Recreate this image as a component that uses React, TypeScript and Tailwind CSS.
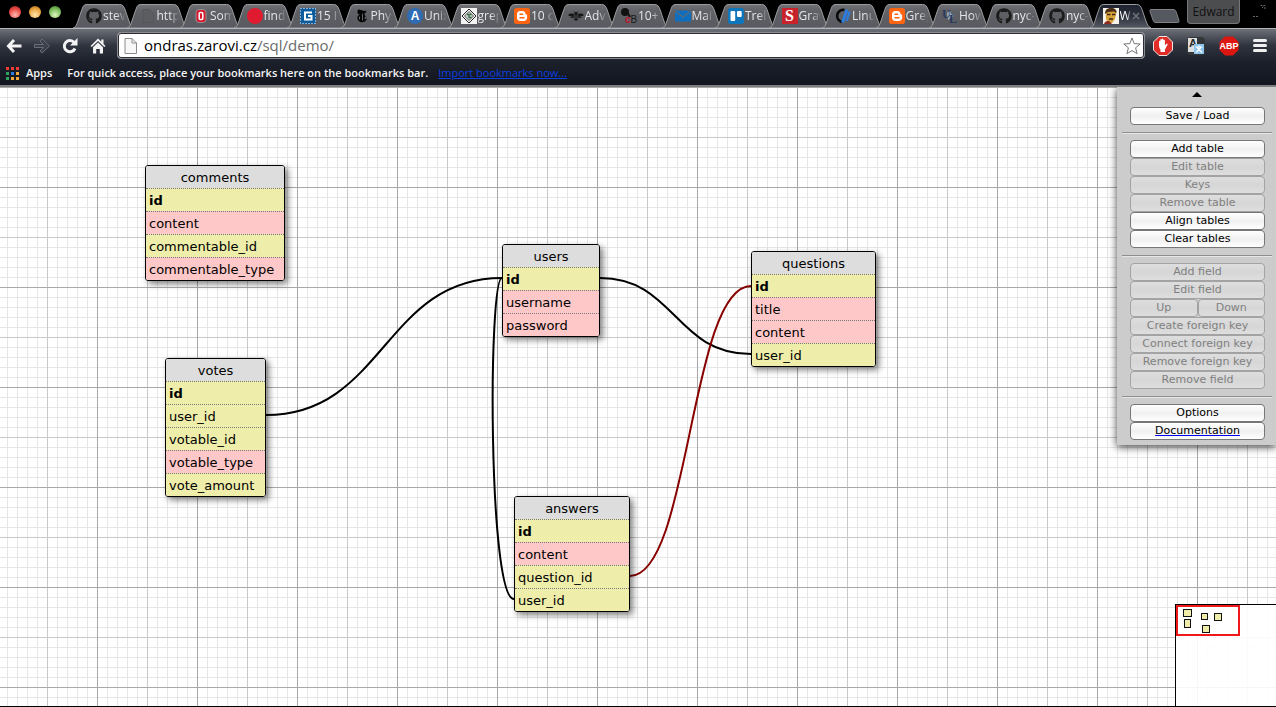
import React from "react";
import { FaGithub } from "react-icons/fa";

type Tab = { title: string; icon: React.ReactNode; active?: boolean };

const glyph = "font-['Liberation_Sans',sans-serif] font-bold";

const blogger = (
  <svg viewBox="0 0 16 16" className="size-4">
    <rect width="16" height="16" rx="2.5" fill="#ff6510" />
    <path
      d="M6 3h2.6C10.300 3 11.400 4.200 11.400 5.600c0 .9.5 1 1.100 1 .4 0 .6.3.6.7v2.400c0 1.900-1.400 3.300-3.300 3.300H6.200C4.300 13 3 11.700 3 9.800V6.200C3 4.300 4.300 3 6 3z"
      fill="#fff"
    />
    <path d="M6 6.200h2.600M6 9.800h4" stroke="#ff6510" strokeWidth="1.500" strokeLinecap="round" />
  </svg>
);

const github = <FaGithub className="size-4 text-[#1b1b1b]" />;

const tabs: Tab[] = [
  { title: "stev", icon: github },
  {
    title: "http",
    icon: (
      <svg viewBox="0 0 16 16" className="size-4">
        <path d="M3 1.500h6.500l4 4v9H3z" fill="#5b5d61" stroke="#54565a" />
      </svg>
    ),
  },
  {
    title: "Som",
    icon: (
      <svg viewBox="0 0 16 16" className="size-4">
        <rect x="3" y="1.500" width="10" height="13" rx="3" fill="#d9182d" stroke="#8f9194" />
        <rect x="6.200" y="4.500" width="3.600" height="7" rx="1" fill="none" stroke="#fff" strokeWidth="1.500" />
      </svg>
    ),
  },
  {
    title: "find",
    icon: (
      <svg viewBox="0 0 16 16" className="size-4">
        <circle cx="8" cy="8" r="8" fill="#e01b2f" />
      </svg>
    ),
  },
  {
    title: "15 I",
    icon: (
      <svg viewBox="0 0 16 16" className="size-4">
        <rect width="16" height="16" fill="#0e5c9c" />
        <rect x=".5" y=".5" width="15" height="15" fill="none" stroke="#fff" strokeDasharray="1 2" />
        <path d="M12 4.500H5v7h6.500V8H8" fill="none" stroke="#fff" strokeWidth="2" />
      </svg>
    ),
  },
  {
    title: "Phys",
    icon: (
      <svg viewBox="0 0 16 16" className="size-4">
        <path
          d="M3.500 3.200c0-1.200 1-1.900 2.200-1.500l4.500 1.300c1 .2 1.600-.2 1.700-1.100.8 1.600.2 2.900-1.300 3.100v2.200l1.400 1-1.400 1v2.300c1.100-.1 1.900-.8 2.200-1.900.2 2.800-1.600 4.600-4.400 4.600-3 0-5-1.800-5-4.300 0-1.700 1-2.900 2.500-3.400-1 .1-2.200-.400-2.400-1.700z"
          fill="#050505"
        />
        <path d="M8.500 5.500v7M5.500 8.500v3" stroke="#65676b" strokeWidth="1" />
      </svg>
    ),
  },
  {
    title: "Unix",
    icon: (
      <span className={"flex size-4 items-center justify-center rounded-full bg-[#2f6cb3] text-xs text-white " + glyph}>
        A
      </span>
    ),
  },
  {
    title: "grep",
    icon: (
      <svg viewBox="0 0 16 16" className="size-4">
        <rect width="16" height="16" fill="#f2f2f2" />
        <path d="M8 1l7 7-7 7-7-7z" fill="none" stroke="#222" strokeWidth="1" />
        <path d="M8 3.500L12.500 8 8 12.500 3.500 8z" fill="#c3d2c7" stroke="#333" strokeWidth=".8" />
        <path d="M6 6.500h2v3h2.500M8 6.500h2.500" fill="none" stroke="#3f6b4c" strokeWidth="1.300" />
      </svg>
    ),
  },
  { title: "10 c", icon: blogger },
  {
    title: "Adv",
    icon: (
      <svg viewBox="0 0 16 16" className="size-4">
        <path d="M0 7c2-2 5-2 6.500-.2h3C11 5 14 5 16 7c-1 1.300-3 1.500-5 1.200 1 .3 2 .8 2.500 1.600-1.500.5-2.500 0-3.500-.6H6c-1 .6-2 1.100-3.500.6.5-.8 1.500-1.300 2.500-1.600-2 .3-4 .1-5-1.200z" fill="#151515" />
        <path d="M6 3.500l1 1.200h2l1-1.200" stroke="#151515" fill="none" />
        <circle cx="8" cy="5.700" r="1.600" fill="#151515" />
        <path d="M5.500 8.500h5l-.5 3L8 13 6 11.500z" fill="#151515" />
        <path d="M5.500 8h5M5.500 10h5" stroke="#65676b" strokeWidth=".8" />
      </svg>
    ),
  },
  {
    title: "10+",
    icon: (
      <span className={"relative block size-4 text-[10px] leading-none " + glyph}>
        <svg viewBox="0 0 16 16" className="size-4">
          <circle cx="4" cy="4" r="4" fill="#111" />
          <path d="M6 4l3 5" stroke="#111" strokeWidth="2" />
        </svg>
        <span className="absolute left-1 top-[7px] text-[#c8102e]">
          c<span className="font-normal text-[#1a1a1a]">B</span>
        </span>
      </span>
    ),
  },
  {
    title: "Mail",
    icon: (
      <svg viewBox="0 0 16 16" className="size-4">
        <rect y="2.500" width="16" height="11" fill="#0f6fbe" />
        <path d="M0 3l8 6 8-6" fill="none" stroke="#5b6a7a" strokeWidth="1.200" />
      </svg>
    ),
  },
  {
    title: "Trel",
    icon: (
      <svg viewBox="0 0 16 16" className="size-4">
        <rect width="16" height="16" rx="2.500" fill="#0f76bb" />
        <rect x="2.500" y="3" width="4.700" height="10" rx="1" fill="#fff" />
        <rect x="9" y="3" width="4.700" height="6" rx="1" fill="#fff" />
      </svg>
    ),
  },
  {
    title: "Grav",
    icon: (
      <span className="flex size-4 items-center justify-center bg-[#c9222b] font-['Liberation_Serif',serif] text-base leading-none font-bold text-white">
        S
      </span>
    ),
  },
  {
    title: "Linu",
    icon: (
      <svg viewBox="0 0 16 16" className="size-4">
        <path d="M9.500 2A6 6 0 1 0 7 14" fill="none" stroke="#080808" strokeWidth="2.500" />
        <path d="M12 1.500L7.500 14.500" stroke="#2d7de0" strokeWidth="3" />
        <path d="M14.700 3.500l-3 9.500" stroke="#2d7de0" strokeWidth="2.200" />
      </svg>
    ),
  },
  { title: "Grep", icon: blogger },
  {
    title: "How",
    icon: (
      <span className="relative block size-4 font-['Liberation_Serif',serif] text-xs leading-none font-bold text-[#26395f]">
        <span className="absolute left-0 top-0">U</span>
        <span className="absolute left-[7px] top-[5px]">L</span>
        <svg viewBox="0 0 16 16" className="size-4">
          <path d="M5 5l3-2 1 3 3 2-3 1-3 3z" fill="#9db4c8" />
        </svg>
      </span>
    ),
  },
  { title: "nyc-", icon: github },
  { title: "nyc-", icon: github },
  {
    title: "W",
    active: true,
    icon: (
      <svg viewBox="0 0 16 16" className="size-4">
        <rect width="16" height="16" fill="#f6f2ea" />
        <path d="M3 6c0-4 3-5.500 6-5 3 0 4.500 2 4 5l-1 5-3 4H5L3 11z" fill="#d8a23a" />
        <path d="M2 6C2 2 4 0 8 0s6 2 5.500 5L11 3.500 5 4z" fill="#4a2c14" />
        <path d="M4 6.500h3.500M9 6.500h3.500M6 11h4" stroke="#3c2412" strokeWidth="1.300" />
        <path d="M1 16c1-3 3-3 5-3l3 3z" fill="#8c2b22" />
      </svg>
    ),
  },
];

function BrowserTab({ tab }: { tab: Tab }) {
  return (
    <button type="button" className="relative flex h-6 min-w-0 flex-1 items-center pl-[13px] text-left">
      <svg viewBox="0 0 62 24" preserveAspectRatio="none" className="absolute inset-y-0 left-0 h-full w-[calc(100%+8px)]">
        <path
          d="M0 24C4 23 4 19 9 5.500 10 2 11 .5 14 .5H47C50 .5 51 2 52.500 5.500 57 19 58 23 62 24z"
          fill={tab.active ? "url(#tabActive)" : "url(#tabIdle)"}
          stroke="#9c9ea1"
          strokeWidth="1"
        />
      </svg>
      <span className="relative shrink-0">{tab.icon}</span>
      <span
        className={
          "relative ml-px min-w-0 flex-1 whitespace-nowrap text-xs font-medium [mask-image:linear-gradient(to_right,black_55%,transparent_95%)] " +
          (tab.active ? "text-white" : "text-[#e4e5e7]")
        }
      >
        {tab.title}
      </span>
      {tab.active && (
        <svg viewBox="0 0 8 8" className="relative mr-[3px] size-2 shrink-0">
          <path d="M1 1l6 6M7 1L1 7" stroke="#6d727b" strokeWidth="1.500" />
        </svg>
      )}
    </button>
  );
}

function TrafficLight({ tone }: { tone: string }) {
  return <button type="button" aria-label="Window control" className={"size-3 rounded-full " + tone} />;
}

function Chrome() {
  return (
    <header className="bg-black">
      <svg className="absolute size-0">
        <defs>
          <linearGradient id="tabIdle" x1="0" y1="0" x2="0" y2="1">
            <stop offset="0" stopColor="#6f7175" />
            <stop offset=".3" stopColor="#5f6166" />
            <stop offset="1" stopColor="#585a5f" />
          </linearGradient>
          <linearGradient id="tabActive" x1="0" y1="0" x2="0" y2="1">
            <stop offset="0" stopColor="#1e2230" />
            <stop offset=".5" stopColor="#2c313d" />
            <stop offset="1" stopColor="#565a63" />
          </linearGradient>
        </defs>
      </svg>
      <div className="flex h-7 items-end">
        <div className="flex w-[73px] shrink-0 gap-2 self-start pt-[6px] pl-[9px]">
          <TrafficLight tone="bg-[radial-gradient(circle_at_50%_75%,#ffb9b3,#e8443f_60%,#8f2622)]" />
          <TrafficLight tone="bg-[radial-gradient(circle_at_50%_75%,#ffe7ac,#e9a13b_60%,#8c5a18)]" />
          <TrafficLight tone="bg-[radial-gradient(circle_at_50%_75%,#dcf7c0,#76b956_60%,#3f6e2c)]" />
        </div>
        <nav className="flex min-w-0 flex-1">
          {tabs.map((tab, i) => (
            <BrowserTab key={i} tab={tab} />
          ))}
        </nav>
        <div className="flex w-[133px] shrink-0 items-start self-stretch pl-[6px]">
          <button type="button" aria-label="New tab" className="mt-[9px]">
            <svg viewBox="0 0 31 14" className="h-[14px] w-[31px]">
              <path d="M2 .5h22c2 0 2.500 1 3 2l3 9c.3 1 0 2-1.500 2H7c-1.500 0-2.300-.5-2.800-2L1 2.500C.6 1.200 1 .5 2 .5z" fill="#55585f" stroke="#808288" />
            </svg>
          </button>
          <button type="button" className="ml-[7px] h-6 w-[53px] rounded-b-sm border border-t-0 border-[#75777a] bg-[#4c4d4f] text-xs font-medium text-[#111]">
            Edward
          </button>
          <svg viewBox="0 0 16 16" className="mt-[2px] ml-3 size-4">
            <path d="M1 14.500h6M8.500 3.500h4.500v4M10 6l3-3" stroke="#66686b" strokeDasharray="2 1" fill="none" />
          </svg>
        </div>
      </div>

      <div className="border-t border-[#b3b5b8] bg-linear-to-b from-[#6d7077] via-[#30343f] via-50% to-[#1c202b]">
        <div className="flex h-[33px] items-center pl-[6px]">
          <div className="flex w-[111px] shrink-0 items-center gap-3 text-[#f3f3f3]">
            <button type="button" aria-label="Back">
              <svg viewBox="0 0 16 16" className="size-4">
                <path d="M8 2L2.500 8 8 14M3 8H15.500" fill="none" stroke="currentColor" strokeWidth="3" />
              </svg>
            </button>
            <button type="button" aria-label="Forward">
              <svg viewBox="0 0 16 16" className="size-4">
                <path d="M.5 6.500H9.500L6 3l2-2 7.500 7L8 15 6 13 9.500 9.500H.5z" fill="#3b3f49" stroke="#6a6d75" />
              </svg>
            </button>
            <button type="button" aria-label="Reload">
              <svg viewBox="0 0 16 16" className="size-4">
                <path d="M13 10.500A5.600 5.600 0 1 1 12.200 4.500" fill="none" stroke="currentColor" strokeWidth="3" />
                <path d="M15.500 0v7.500H8z" fill="currentColor" />
              </svg>
            </button>
            <button type="button" aria-label="Home">
              <svg viewBox="0 0 16 16" className="size-4">
                <path d="M8 .5L.5 8l1.200 1L8 3l6.300 6 1.200-1L13.500 6V1.500h-2.200V3.800z" fill="currentColor" />
                <path d="M8 4.500l5 4.800V15.500H9.800V11H6.200v4.500H3V9.300z" fill="currentColor" />
              </svg>
            </button>
          </div>
          <div className="relative flex h-[27px] min-w-0 flex-1 items-center rounded border border-[#8a8c90] bg-white pl-[6px] shadow-[inset_0_0_0_1px_#2a2d36]">
            <svg viewBox="0 0 13 16" className="h-4 w-[13px] shrink-0">
              <path d="M1 .5h7l4.500 4.500v10.500H1z" fill="#f7f7f7" stroke="#8b8b8b" />
              <path d="M8 .5V5h4.500" fill="none" stroke="#8b8b8b" />
            </svg>
            <label className="ml-[7px] flex flex-1 text-[15px] whitespace-nowrap text-black">
              <span>ondras.zarovi.cz</span>
              <input
                aria-label="Address"
                defaultValue="/sql/demo/"
                className="min-w-0 flex-1 bg-transparent text-[#6b6b6b] outline-none"
              />
            </label>
            <button type="button" aria-label="Bookmark" className="mr-[3px] shrink-0">
              <svg viewBox="0 0 18 18" className="size-[18px]">
                <path d="M9 1l2.200 5.600 6 .4-4.600 3.800 1.500 5.900L9 13.500l-5.100 3.200 1.500-5.900L.8 7l6-.4z" fill="#fff" stroke="#757575" />
              </svg>
            </button>
          </div>
          <div className="flex w-[131px] shrink-0 items-center gap-[14px] pl-2">
            <button type="button" aria-label="Blocker">
              <svg viewBox="0 0 20 20" className="size-5">
                <path d="M6 .5h8L19.500 6v8L14 19.500H6L.5 14V6z" fill="#e02d28" stroke="#f1e4e4" />
                <path d="M6 9.500V5.500c0-1 1.300-1 1.300 0V4c0-1.200 1.500-1.200 1.500 0v-.7c0-1.200 1.600-1.200 1.600 0V4.500c0-1.100 1.500-1.100 1.500 0v5l1.200-1.500c.8-.8 1.900-.2 1.400.8L12 13.500V16H7.500v-2.500C6.500 12.500 6 11 6 9.500z" fill="#fff" />
              </svg>
            </button>
            <button type="button" aria-label="Translate" className={"relative size-[18px] rounded-sm bg-[#34373a] text-left text-[11px] leading-none text-[#2a2a2a] " + glyph}>
              <span className="absolute top-px left-px h-[14px] w-[9px] bg-[#dcdedf] pl-px">A</span>
              <svg viewBox="0 0 10 10" className="absolute right-px bottom-px size-[10px]">
                <rect width="10" height="10" fill="#8cc3ea" />
                <path d="M1.500 3h7M5 1.500V3M7 3.500L2 8.500M3 3.500l5 5" stroke="#fff" strokeWidth="1.200" />
              </svg>
            </button>
            <button type="button" aria-label="Adblock" className="relative size-5">
              <svg viewBox="0 0 20 20" className="absolute inset-0 size-5">
                <path d="M6 .5h8L19.500 6v8L14 19.500H6L.5 14V6z" fill="#dc1712" />
              </svg>
              <span className={"relative block text-[9px] leading-5 text-white " + glyph}>ABP</span>
            </button>
            <button type="button" aria-label="Menu" className="flex flex-col gap-[2px]">
              <span className="h-[3px] w-[14px] rounded-xs bg-[#f0f0f0]" />
              <span className="h-[3px] w-[14px] rounded-xs bg-[#f0f0f0]" />
              <span className="h-[3px] w-[14px] rounded-xs bg-[#f0f0f0]" />
            </button>
          </div>
        </div>
      </div>
      <div className="flex h-[25px] items-center border-b-2 border-[#7d7d7d] bg-linear-to-b from-[#1c202b] to-[#13161f] pl-[6px] text-[11px] font-semibold text-[#f4f4f4]">
        <svg viewBox="0 0 13 13" className="size-[13px]">
          <path d="M0 0h3v3H0zM5 0h3v3H5zM10 0h3v3h-3z" fill="#ef3b36" />
          <path d="M0 5h3v3H0z" fill="#2fa35c" />
          <path d="M5 5h3v3H5z" fill="#2a7de1" />
          <path d="M10 5h3v3h-3zM5 10h3v3H5zM10 10h3v3h-3z" fill="#f5a83a" />
          <path d="M0 10h3v3H0z" fill="#2fa35c" />
        </svg>
        <a href="#apps" className="ml-[7px]">Apps</a>
        <span className="ml-[15px]">For quick access, place your bookmarks here on the bookmarks bar.</span>
        <a href="#import" className="ml-[10px] font-medium text-[#0a3fe0] underline">Import bookmarks now...</a>
      </div>
    </header>
  );
}

type Field = [name: string, kind: "key" | "num" | "text"];
type Entity = { name: string; place: string; fields: Field[] };

const entities: Entity[] = [
  {
    name: "comments",
    place: "left-[145px] top-[78px] w-[140px]",
    fields: [["id", "key"], ["content", "text"], ["commentable_id", "num"], ["commentable_type", "text"]],
  },
  {
    name: "users",
    place: "left-[502px] top-[157px] w-[98px]",
    fields: [["id", "key"], ["username", "text"], ["password", "text"]],
  },
  {
    name: "questions",
    place: "left-[751px] top-[164px] w-[125px]",
    fields: [["id", "key"], ["title", "text"], ["content", "text"], ["user_id", "num"]],
  },
  {
    name: "votes",
    place: "left-[165px] top-[271px] w-[101px]",
    fields: [["id", "key"], ["user_id", "num"], ["votable_id", "num"], ["votable_type", "text"], ["vote_amount", "num"]],
  },
  {
    name: "answers",
    place: "left-[514px] top-[409px] w-[116px]",
    fields: [["id", "key"], ["content", "text"], ["question_id", "num"], ["user_id", "num"]],
  },
];

const fieldTone = {
  key: "bg-[#eeeeaa] font-bold",
  num: "bg-[#eeeeaa]",
  text: "bg-[#ffc8c8]",
};

function EntityTable({ entity }: { entity: Entity }) {
  return (
    <div
      className={
        "absolute overflow-hidden rounded-[3px] border border-black shadow-[3px_3px_6px_rgba(0,0,0,0.5)] font-['DejaVu_Sans',sans-serif] text-[13px] leading-5 text-black " +
        entity.place
      }
    >
      <table className="w-full border-separate border-spacing-0">
        <thead>
          <tr>
            <th className="h-[22px] bg-[#dddddd] p-0 pt-[2px] font-normal">{entity.name}</th>
          </tr>
        </thead>
        <tbody>
          {entity.fields.map(([name, kind]) => (
            <tr key={name}>
              <td className={"h-[23px] border-t border-dotted border-[#777] p-0 pt-[2px] pl-[3px] " + fieldTone[kind]}>{name}</td>
            </tr>
          ))}
        </tbody>
      </table>
    </div>
  );
}

function PanelButton({ label, disabled }: { label: string; disabled?: boolean }) {
  return (
    <button
      type="button"
      disabled={disabled}
      className="h-[18px] w-full min-w-0 flex-1 rounded border border-[#777] bg-linear-to-b from-white via-[#f0f0f0] via-50% to-white leading-4 text-black disabled:border-[#a3a3a3] disabled:from-[#dedede] disabled:via-[#d6d6d6] disabled:to-[#dedede] disabled:text-[#808080]"
    >
      {label}
    </button>
  );
}

function Group({ children }: { children: React.ReactNode }) {
  return <div className="flex flex-col pr-[7px] pl-2">{children}</div>;
}

function Rule() {
  return <hr className="mt-[7px] mb-[6px] h-[2px] border-t border-b border-t-[#8e8e8e] border-b-[#e6e6e6]" />;
}

function SidePanel() {
  return (
    <aside className="absolute top-0 right-0 w-[159px] bg-[#cccccc] pr-1 pb-[5px] pl-[5px] font-['DejaVu_Sans',sans-serif] text-[11px] shadow-[0_2px_8px_rgba(0,0,0,0.75)]">
      <button type="button" aria-label="Collapse" className="flex h-5 w-full items-start justify-center pt-[5px]">
        <svg viewBox="0 0 10 5" className="h-[5px] w-[10px]">
          <path d="M5 0l5 5H0z" fill="#000" />
        </svg>
      </button>
      <Group>
        <PanelButton label="Save / Load" />
      </Group>
      <Rule />
      <Group>
        <PanelButton label="Add table" />
        <PanelButton label="Edit table" disabled />
        <PanelButton label="Keys" disabled />
        <PanelButton label="Remove table" disabled />
        <PanelButton label="Align tables" />
        <PanelButton label="Clear tables" />
      </Group>
      <Rule />
      <Group>
        <PanelButton label="Add field" disabled />
        <PanelButton label="Edit field" disabled />
        <div className="flex">
          <PanelButton label="Up" disabled />
          <PanelButton label="Down" disabled />
        </div>
        <PanelButton label="Create foreign key" disabled />
        <PanelButton label="Connect foreign key" disabled />
        <PanelButton label="Remove foreign key" disabled />
        <PanelButton label="Remove field" disabled />
      </Group>
      <Rule />
      <Group>
        <PanelButton label="Options" />
        <a
          href="#documentation"
          className="h-[18px] rounded border border-[#777] bg-linear-to-b from-white via-[#f0f0f0] via-50% to-white text-center leading-4 text-black underline decoration-[#0000ee]"
        >
          Documentation
        </a>
      </Group>
    </aside>
  );
}

const gridLines = [
  "bg-[linear-gradient(to_right,#a8a8a8_1px,transparent_1px),linear-gradient(to_bottom,#a8a8a8_1px,transparent_1px),linear-gradient(to_right,#c9c9c9_1px,transparent_1px),linear-gradient(to_bottom,#c9c9c9_1px,transparent_1px),linear-gradient(to_right,#e6e6e6_1px,transparent_1px),linear-gradient(to_bottom,#e6e6e6_1px,transparent_1px)]",
  "bg-[size:100px_100px,100px_100px,50px_50px,50px_50px,10px_10px,10px_10px]",
  "bg-[position:97px_0px,97px_0px,47px_0px,47px_0px,7px_0px,7px_0px]",
].join(" ");

export default function App() {
  return (
    <div className="flex min-h-screen flex-col bg-white font-['Open_Sans','Noto_Sans',sans-serif]">
      <Chrome />
      <main className={"relative flex-1 overflow-hidden border-b border-black " + gridLines}>
        <svg className="absolute top-0 left-0 h-full w-full" fill="none" strokeWidth="2">
          <path d="M266 328C384 328 384 191 502 191" stroke="#000" />
          <path d="M600 191C675 191 675 267 751 267" stroke="#000" />
          <path d="M502 191C488 191 488 512 514 512" stroke="#000" />
          <path d="M630 489C690 489 690 199 751 199" stroke="#880000" />
        </svg>
        {entities.map((entity) => (
          <EntityTable key={entity.name} entity={entity} />
        ))}
        <SidePanel />
        <div className="absolute right-0 bottom-0 h-[102px] w-[101px] border-t border-l border-black bg-white/90">
          <svg viewBox="0 0 100 101" className="h-[101px] w-[100px]">
            <rect x="1" y="1" width="62" height="29" fill="#fff" stroke="#f01818" strokeWidth="2" />
            <g fill="#eeeeaa" stroke="#111" strokeWidth="1">
              <rect x="7.500" y="4.500" width="8" height="7" />
              <rect x="8.500" y="14.500" width="6" height="8" />
              <rect x="25.500" y="8.500" width="6" height="6" />
              <rect x="38.500" y="8.500" width="7" height="7" />
              <rect x="26.500" y="20.500" width="7" height="7" />
            </g>
          </svg>
        </div>
      </main>
    </div>
  );
}
